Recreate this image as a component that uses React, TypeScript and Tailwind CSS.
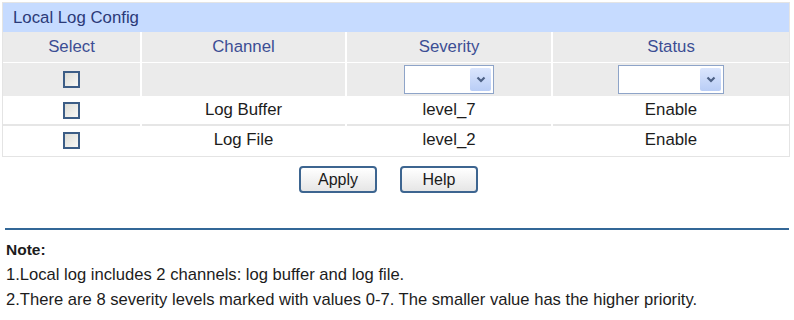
import React from 'react';

const cols = ['w-[137px]', 'w-[203px]', 'w-[204px]', 'flex-1'];

function Checkbox() {
  return (
    <span className="inline-block h-[17px] w-[17px] border-2 border-[#3c5d86] bg-gradient-to-br from-[#dcdcd6] to-[#f8f8f6]" />
  );
}

function Select({ w }: { w: string }) {
  return (
    <div className={`flex h-[29px] ${w} items-stretch border border-[#8ea4c8] bg-white p-[2px]`}>
      <div className="flex-1" />
      <div className="flex w-[21px] items-center justify-center rounded-[2px] bg-gradient-to-b from-[#dbe6fd] to-[#b9cdf6]">
        <svg width="10" height="7" viewBox="0 0 10 7">
          <path d="M1.5 1.5 L5 5 L8.5 1.5" fill="none" stroke="#4d6185" strokeWidth="2.2" />
        </svg>
      </div>
    </div>
  );
}

function Button({ label }: { label: string }) {
  return (
    <button className="h-[27px] w-[78px] rounded-[4px] border-2 border-[#3d6590] bg-gradient-to-b from-white to-[#e6e6e6] text-[16px] text-[#1a1a1a]">
      {label}
    </button>
  );
}

const rows = [
  { channel: 'Log Buffer', severity: 'level_7', status: 'Enable' },
  { channel: 'Log File', severity: 'level_2', status: 'Enable' },
];

export default function App() {
  return (
    <div className="h-[320px] w-[794px] bg-white font-['Liberation_Sans',Arial,sans-serif]">
      <div className="pl-[2px] pt-[2px] w-[790px]">
        <div className="border border-[#e4e4e4]">
          {/* Title */}
          <div className="flex h-[29px] items-center bg-[#c6dbff] pl-[10px] text-[16.8px] text-[#2b3a78]">
            Local Log Config
          </div>

          {/* Header */}
          <div className="flex gap-x-[2px] bg-white">
            {['Select', 'Channel', 'Severity', 'Status'].map((h, i) => (
              <div key={h} className={`${cols[i]} flex h-[30px] items-center justify-center bg-[#ebebeb] text-[16.8px] text-[#3c4e94]`}>
                {h}
              </div>
            ))}
          </div>

          {/* Filter row */}
          <div className="flex gap-x-[2px] bg-white pt-px">
            <div className={`${cols[0]} flex h-[33px] items-center justify-center bg-[#ebebeb]`}>
              <Checkbox />
            </div>
            <div className={`${cols[1]} h-[33px] bg-[#ebebeb]`} />
            <div className={`${cols[2]} flex h-[33px] items-center justify-center bg-[#ebebeb]`}>
              <Select w="w-[90px]" />
            </div>
            <div className={`${cols[3]} flex h-[33px] items-center justify-center bg-[#ebebeb]`}>
              <Select w="w-[106px]" />
            </div>
          </div>

          {/* Data rows */}
          {rows.map((r, idx) => {
            const b = idx === rows.length - 1 ? 'border-transparent' : 'border-[#e6e6e6]';
            return (
              <div key={r.channel} className="flex gap-x-[2px] bg-white text-[16.8px] text-[#1c1c1c]">
                <div className={`${cols[0]} flex h-[30px] items-center justify-center border-b-2 ${b}`}>
                  <Checkbox />
                </div>
                <div className={`${cols[1]} flex h-[30px] items-center justify-center border-b-2 ${b}`}>
                  {r.channel}
                </div>
                <div className={`${cols[2]} flex h-[30px] items-center justify-center border-b-2 ${b}`}>
                  {r.severity}
                </div>
                <div className={`${cols[3]} flex h-[30px] items-center justify-center border-b-2 ${b}`}>
                  {r.status}
                </div>
              </div>
            );
          })}
        </div>
      </div>

      {/* Buttons */}
      <div className="mt-[9px] flex gap-[23px] pl-[299px]">
        <Button label="Apply" />
        <Button label="Help" />
      </div>

      {/* Note */}
      <div className="mx-[5px] mt-[35px] h-[2px] bg-[#336797]" />
      <div className="px-[6px] pt-[7px] text-[16.6px] leading-[25px] text-[#1c1c1c]">
        <div className="text-[15.5px] font-bold">Note:</div>
        <div>1.Local log includes 2 channels: log buffer and log file.</div>
        <div>2.There are 8 severity levels marked with values 0-7. The smaller value has the higher priority.</div>
      </div>
    </div>
  );
}
